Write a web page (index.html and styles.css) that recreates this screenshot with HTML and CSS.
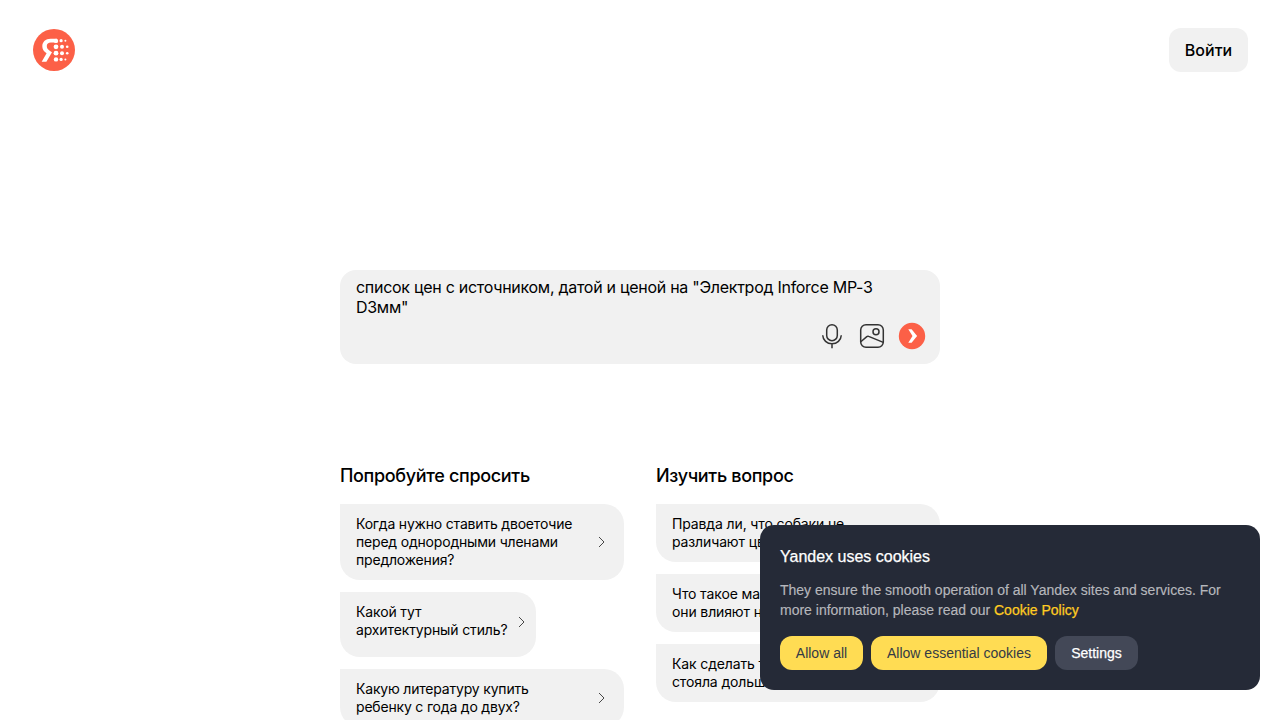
FILE: index.html
```html
<!DOCTYPE html>
<html lang="ru">
<head>
<meta charset="utf-8">
<title>Яндекс Нейро</title>
<link rel="stylesheet" href="styles.css">
</head>
<body>
<div class="page">
  <header class="header">
    <svg class="logo" viewBox="0 0 44 44">
      <circle cx="22" cy="22" r="21" fill="#fc6047"/>
      <path d="M25 10.8H18.6C13.6 10.8 10.3 13.8 10.3 18.2C10.3 21.3 11.7 23.2 14.6 25.3L9.7 33.7H14.4L20 24.2L18 22.9C15.7 21.4 14.8 20.1 14.8 18C14.8 15.8 16.3 14.4 18.9 14.4H25Z" fill="#fff"/>
      <g fill="#fff">
        <circle cx="24" cy="12.9" r="2.2"/><circle cx="24" cy="18.8" r="2.4"/><circle cx="24" cy="25.2" r="2.4"/><circle cx="24" cy="31.4" r="2.2"/>
        <circle cx="29.1" cy="12.7" r="1.6"/><circle cx="30" cy="18.8" r="2"/><circle cx="30" cy="25.2" r="2"/><circle cx="29.1" cy="31.4" r="1.6"/>
        <circle cx="33.4" cy="12.7" r="1"/><circle cx="35.2" cy="18.8" r="1.3"/><circle cx="35.2" cy="25.2" r="1.3"/><circle cx="33.4" cy="31.4" r="1"/>
      </g>
    </svg>
    <a class="login">Войти</a>
  </header>
  <main class="content">
    <section class="search">
      <div class="query">список цен с источником, датой и ценой на "Электрод Inforce MP-3<br>D3мм"</div>
      <div class="actions">
        <svg class="icon" viewBox="0 0 28 28" fill="none" stroke="#333" stroke-width="1.5">
          <rect x="8.7" y="2.7" width="10.6" height="16" rx="5.3"/><path d="M4.7 13.2c.3 5 4.2 8.6 9.3 8.6s9-3.6 9.3-8.6M14 22v4.3"/>
        </svg>
        <svg class="icon" viewBox="0 0 28 28" fill="none" stroke="#333" stroke-width="1.5">
          <rect x="2.7" y="2.7" width="22.6" height="22.6" rx="5.3"/><circle cx="18" cy="9.8" r="3"/><path d="M2.8 19.7l6-5.1q.9-.7 1.9-.2l14.6 6"/>
        </svg>
        <svg class="icon" viewBox="0 0 28 28">
          <circle cx="14" cy="14" r="13.2" fill="#fc6047"/><path d="M10.3 7.3h3.3l5.5 6.7-5.5 6.7h-3.3l4.2-6.7z" fill="#fff"/>
        </svg>
      </div>
    </section>
    <div class="columns">
      <section class="column">
        <h2 class="title">Попробуйте спросить</h2>
        <div class="card"><span>Когда нужно ставить двоеточие<br>перед однородными членами<br>предложения?</span><svg class="chevron" viewBox="0 0 12 12"><path d="M3 1l5 5-5 5"/></svg></div>
        <div class="card card-short"><span>Какой тут<br>архитектурный стиль?</span><svg class="chevron" viewBox="0 0 12 12"><path d="M3 1l5 5-5 5"/></svg></div>
        <div class="card"><span>Какую литературу купить<br>ребенку с года до двух?</span><svg class="chevron" viewBox="0 0 12 12"><path d="M3 1l5 5-5 5"/></svg></div>
      </section>
      <section class="column column-explore">
        <h2 class="title">Изучить вопрос</h2>
        <div class="card"><span>Правда ли, что собаки не<br>различают цвета?</span></div>
        <div class="card"><span>Что такое магнитные бури и как<br>они влияют на человека?</span></div>
        <div class="card"><span>Как сделать так, чтобы елка<br>стояла дольше?</span></div>
      </section>
    </div>
  </main>
</div>
<aside class="cookies">
  <h3 class="cookies-title">Yandex uses cookies</h3>
  <p class="cookies-text">They ensure the smooth operation of all Yandex sites and services. For<br>more information, please read our <a class="policy">Cookie Policy</a></p>
  <div class="buttons">
    <button class="button">Allow all</button>
    <button class="button button-essential">Allow essential cookies</button>
    <button class="button button-settings">Settings</button>
  </div>
</aside>
</body>
</html>
```
FILE: styles.css
```css
* { box-sizing: border-box; }
body { margin: 0; background: #fff; color: #000; font-family: Inter, sans-serif; overflow: hidden; }
.page { height: 720px; overflow: hidden; }
.header { display: flex; justify-content: space-between; align-items: center; height: 100px; padding: 0 32px; }
.logo { width: 44px; height: 44px; }
.login { width: 79px; height: 44px; border-radius: 12px; background: #f1f1f1; font-size: 16px; font-weight: 500; line-height: 44px; text-align: center; white-space: nowrap; }
.content { width: 600px; margin: 170px auto 0; }
.search { display: flex; flex-direction: column; justify-content: space-between; height: 94px; padding: 7px 14px 14px 16px; border-radius: 16px; background: #f1f1f1; }
.query { font-size: 16px; line-height: 20px; letter-spacing: -.28px; white-space: nowrap; }
.actions { display: flex; justify-content: flex-end; gap: 12px; }
.icon { width: 28px; height: 28px; }
.columns { display: grid; grid-template-columns: 284px 284px; gap: 32px; margin-top: 100px; }
.column { display: flex; flex-direction: column; gap: 12px; }
.title { margin: 0 0 4px; font-size: 18px; font-weight: 500; line-height: 24px; letter-spacing: -.33px; white-space: nowrap; }
.card { display: flex; justify-content: space-between; align-items: center; padding: 11px 16px; border-radius: 0 20px 20px 20px; background: #f1f1f1; font-size: 14px; line-height: 18px; letter-spacing: -.19px; white-space: nowrap; }
.card-short { width: 196px; height: 65px; padding: 11px 8px 18px 16px; letter-spacing: -.13px; }
.column-explore .card { letter-spacing: -.13px; }
.chevron { flex: none; width: 12px; height: 12px; fill: none; stroke: #333; stroke-width: .9; }
.card-short .chevron { margin-top: 1px; }
.cookies { position: absolute; left: 760px; top: 525px; width: 500px; height: 165px; padding: 20px; border-radius: 14px; background: #252a37; font-family: "Liberation Sans", Arial, sans-serif; }
.cookies-title { margin: 0 0 12px; color: #fff; font-size: 16px; font-weight: 400; line-height: 23px; -webkit-text-stroke: .25px #fff; }
.cookies-text { margin: 0 0 16px; color: #b6b7bc; font-size: 14px; line-height: 20px; white-space: nowrap; -webkit-text-stroke: .15px #b6b7bc; }
.policy { color: #fc2; -webkit-text-stroke: .25px #fc2; }
.buttons { display: flex; gap: 8px; }
.button { width: 83px; height: 34px; padding: 0; border: 0; border-radius: 12px; background: #ffdc53; color: #343a45; font: 14px "Liberation Sans", Arial, sans-serif; }
.button-essential { width: 176px; }
.button-settings { background: #434857; color: #fff; -webkit-text-stroke: .25px #fff; }
```
